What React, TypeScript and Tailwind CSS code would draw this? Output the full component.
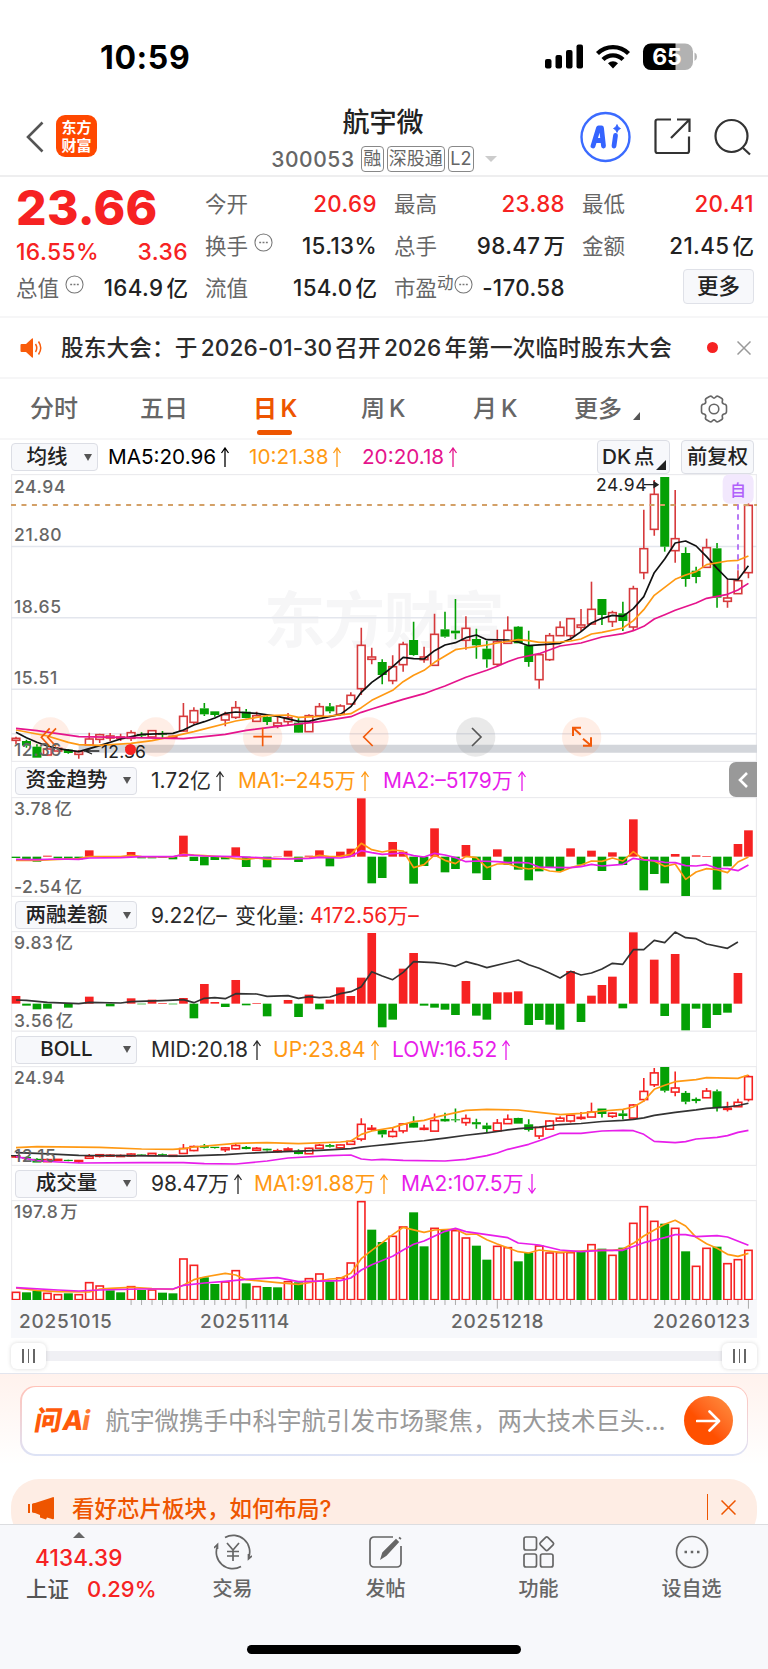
import type { ReactNode } from "react";

type Point = [number, number];
type Candle = [string, number, number, number, number];

const STEP = 31.39;
const cx = (i: number) => 48 + STEP * i;

// kind, high, body top, body bottom, low
const CANDLES: Candle[] = [
  ["r", 815, 820, 826, 837], ["g", 824, 828, 842, 848], ["g", 838, 845, 878, 878], ["r", 848, 852, 870, 872],
  ["r", 846, 850, 858, 860], ["g", 852, 854, 864, 866], ["r", 855, 860, 868, 881], ["r", 803, 822, 840, 842],
  ["r", 806, 809, 823, 834], ["r", 804, 813, 819, 828], ["r", 806, 816, 820, 828], ["r", 796, 803, 820, 828],
  ["g", 802, 807, 812, 818], ["r", 797, 797, 816, 816], ["g", 798, 804, 809, 820], ["r", 812, 814, 818, 820],
  ["r", 714, 754, 798, 800], ["r", 727, 737, 772, 778], ["g", 714, 730, 748, 753], ["g", 739, 739, 750, 755],
  ["r", 740, 749, 765, 784], ["r", 708, 728, 757, 762], ["g", 732, 740, 759, 760], ["r", 740, 752, 769, 770],
  ["g", 754, 756, 771, 780], ["r", 756, 774, 782, 790], ["r", 744, 758, 770, 780], ["g", 760, 773, 803, 804],
  ["r", 748, 752, 800, 800], ["r", 714, 725, 752, 752], ["g", 714, 724, 739, 745], ["r", 718, 723, 748, 752],
  ["r", 682, 691, 717, 720], ["r", 488, 541, 671, 690], ["r", 548, 576, 583, 598], ["g", 583, 591, 630, 658],
  ["r", 571, 605, 647, 658], ["r", 530, 538, 599, 620], ["g", 470, 525, 570, 572], ["r", 545, 576, 584, 593],
  ["r", 446, 508, 601, 603], ["g", 440, 493, 515, 518], ["g", 402, 497, 505, 523], ["r", 454, 490, 526, 554],
  ["g", 491, 522, 541, 581], ["g", 528, 551, 583, 608], ["r", 494, 530, 598, 605], ["r", 454, 496, 535, 535],
  ["g", 483, 485, 535, 535], ["g", 497, 541, 591, 605], ["r", 566, 569, 644, 671], ["r", 504, 512, 584, 588],
  ["r", 469, 487, 512, 512], ["r", 460, 461, 512, 525], ["r", 432, 480, 487, 500], ["r", 350, 433, 477, 477],
  ["g", 402, 402, 450, 480], ["r", 437, 443, 470, 486], ["g", 410, 445, 468, 498], ["r", 362, 371, 486, 496],
  ["r", 134, 251, 323, 343], ["r", 45, 88, 193, 212], ["g", 36, 36, 245, 260], ["r", 75, 221, 257, 293],
  ["g", 247, 264, 342, 365], ["g", 305, 317, 336, 355], ["r", 221, 248, 307, 307], ["g", 234, 250, 398, 428],
  ["r", 343, 399, 409, 428], ["r", 316, 347, 386, 386], ["r", 107, 121, 323, 340],
];

const MA5: Point[] = [
  [0, 802], [1, 818], [2, 832], [3, 843], [4, 851], [6, 860], [8, 842], [10, 822], [12, 808], [15, 805], [16, 795],
  [17, 780], [18, 770], [19, 759], [20, 745], [21, 741], [23, 745], [25, 754], [27, 769], [28, 769], [29, 761],
  [31, 748], [32, 725], [33, 682], [34, 652], [35, 630], [36, 605], [37, 577], [38, 581], [39, 582], [40, 557],
  [41, 540], [42, 533], [43, 518], [44, 510], [45, 524], [47, 525], [48, 531], [49, 542], [52, 535], [53, 522],
  [54, 500], [55, 474], [56, 460], [57, 451], [58, 454], [59, 431], [60, 395], [61, 323], [62, 282], [63, 234],
  [64, 228], [65, 243], [66, 275], [67, 310], [68, 342], [69, 344], [70, 302],
];
const MA10: Point[] = [
  [0, 795], [3, 813], [5, 832], [6, 839], [8, 841], [11, 835], [13, 827], [15, 814], [17, 800], [21, 768], [24, 752],
  [26, 750], [27, 757], [30, 753], [32, 746], [33, 728], [34, 706], [36, 676], [37, 650], [38, 631], [39, 616],
  [40, 592], [41, 573], [42, 554], [43, 549], [44, 545], [45, 540], [46, 534], [48, 524], [49, 527], [50, 532],
  [52, 531], [53, 528], [54, 522], [55, 507], [56, 502], [58, 489], [59, 467], [60, 434], [61, 391], [62, 367],
  [63, 343], [64, 330], [65, 320], [66, 299], [68, 288], [69, 286], [70, 273],
];
const MA20: Point[] = [
  [0, 790], [2, 797], [6, 815], [10, 817], [16, 821], [18, 815], [20, 808], [22, 796], [25, 784], [29, 770],
  [32, 755], [33, 742], [34, 732], [36, 713], [37, 703], [39, 686], [40, 674], [41, 663], [43, 637], [45, 616],
  [46, 604], [47, 590], [48, 579], [50, 566], [52, 543], [54, 534], [56, 516], [58, 506], [59, 497], [60, 484],
  [61, 462], [62, 449], [63, 436], [65, 414], [66, 400], [68, 388], [69, 375], [70, 355],
];

const FUND_BASE = 289;
const FUND = [
  293, 297, 304, 286, 294, 297, 297, 270, 289, 289, 289, 275, 294, 294, 293, 297, 226, 302, 315, 299, 297, 261, 320,
  289, 321, 288, 271, 305, 286, 270, 318, 274, 265, 114, 369, 353, 245, 274, 370, 317, 204, 336, 326, 254, 339, 359,
  267, 314, 328, 360, 333, 322, 332, 264, 313, 271, 332, 276, 314, 177, 390, 341, 369, 281, 407, 285, 287, 388, 318,
  251, 210,
];
const FUND_MA1: Point[] = [
  [0, 300], [2, 300], [4, 297], [6, 295], [7, 289], [10, 289], [11, 285], [12, 289], [15, 290], [16, 281], [17, 284],
  [18, 286], [20, 290], [21, 295], [22, 297], [23, 293], [24, 297], [26, 295], [28, 293], [29, 285], [30, 289],
  [31, 288], [32, 282], [33, 249], [34, 268], [35, 275], [36, 269], [37, 272], [38, 322], [39, 313], [40, 284],
  [41, 300], [42, 310], [43, 288], [44, 292], [45, 322], [46, 311], [47, 310], [48, 321], [49, 326], [50, 322],
  [51, 332], [52, 335], [53, 322], [54, 314], [55, 302], [56, 303], [57, 293], [58, 302], [59, 274], [60, 298],
  [61, 302], [62, 318], [63, 311], [64, 357], [65, 335], [66, 325], [67, 328], [68, 337], [69, 305], [70, 290],
];
const FUND_MA2: Point[] = [
  [0, 297], [2, 298], [4, 296], [6, 297], [7, 293], [10, 292], [12, 289], [15, 289], [16, 283], [18, 287], [21, 289],
  [24, 293], [26, 296], [28, 294], [29, 291], [31, 293], [32, 288], [33, 271], [34, 277], [35, 282], [37, 278],
  [38, 286], [39, 290], [40, 279], [41, 284], [42, 292], [43, 304], [44, 302], [46, 304], [47, 307], [48, 306],
  [49, 308], [50, 320], [51, 321], [53, 322], [54, 319], [55, 312], [56, 317], [58, 312], [59, 294], [60, 299],
  [61, 301], [62, 306], [63, 307], [64, 316], [65, 317], [66, 313], [67, 324], [68, 325], [69, 331], [70, 314],
];

const MARGIN_BASE = 732;
const MARGIN = [
  709, 738, 749, 747, 732, 744, 732, 711, 732, 740, 732, 716, 734, 720, 730, 734, 715, 776, 673, 727, 742, 661, 737,
  730, 770, 732, 721, 772, 705, 749, 720, 683, 709, 654, 520, 803, 780, 627, 580, 738, 744, 750, 766, 664, 768, 780,
  698, 698, 695, 796, 781, 795, 810, 634, 787, 708, 676, 651, 746, 518, 732, 600, 769, 583, 812, 747, 805, 766, 759,
  640, 732,
];
const MARGIN_LINE: Point[] = [
  [0, 721], [1, 722], [2, 725], [3, 728], [6, 732], [7, 728], [10, 730], [11, 726], [14, 723], [16, 720], [17, 729],
  [18, 716], [19, 714], [20, 717], [21, 702], [23, 703], [24, 710], [26, 708], [27, 716], [28, 711], [29, 714],
  [30, 712], [31, 702], [32, 696], [33, 681], [34, 636], [35, 649], [36, 660], [37, 638], [38, 606], [40, 609],
  [41, 613], [42, 620], [43, 606], [44, 614], [45, 624], [48, 601], [49, 615], [50, 626], [51, 640], [52, 655],
  [53, 635], [54, 646], [55, 640], [56, 628], [57, 611], [58, 614], [59, 570], [60, 570], [61, 542], [62, 549],
  [63, 517], [64, 534], [65, 537], [66, 553], [68, 566], [69, 547],
];

const BOLL_UP: Point[] = [
  [0, 353], [2, 350], [8, 352], [12, 357], [15, 358], [16, 356], [17, 351], [21, 340], [24, 338], [27, 341],
  [31, 336], [32, 333], [33, 313], [34, 303], [36, 293], [37, 283], [38, 275], [39, 271], [40, 262], [43, 241],
  [45, 238], [48, 240], [50, 247], [52, 254], [54, 250], [56, 243], [58, 238], [59, 231], [60, 213], [61, 178],
  [62, 166], [63, 155], [65, 149], [66, 143], [69, 145], [70, 135],
];
const BOLL_LOW: Point[] = [
  [0, 380], [2, 392], [4, 396], [6, 399], [12, 398], [16, 398], [18, 401], [21, 402], [24, 393], [26, 384],
  [30, 377], [32, 375], [33, 387], [34, 390], [35, 388], [37, 391], [41, 393], [43, 388], [45, 377], [46, 369],
  [47, 358], [49, 343], [50, 332], [52, 310], [54, 310], [56, 303], [58, 301], [59, 302], [60, 313], [61, 334],
  [63, 338], [64, 335], [65, 327], [67, 322], [68, 317], [69, 307], [70, 301],
];

const VOLUME_BASE = 810;
const VOLUME = [
  787, 787, 782, 790, 794, 790, 794, 758, 768, 781, 787, 770, 780, 780, 788, 790, 687, 706, 742, 762, 756, 722, 760,
  770, 771, 772, 755, 757, 746, 732, 754, 744, 699, 515, 599, 636, 619, 591, 547, 649, 595, 600, 602, 624, 647, 689,
  649, 653, 694, 668, 648, 669, 668, 668, 664, 644, 656, 676, 653, 580, 530, 574, 581, 595, 664, 709, 655, 650, 701,
  689, 661,
];
const VOLUME_DOWN = [
  1, 2, 5, 9, 10, 12, 14, 15, 18, 19, 22, 24, 25, 27, 30, 34, 35, 38, 39, 41, 44, 45, 48, 49, 54, 56, 58, 62, 64, 67,
];
const VOLUME_MA1: Point[] = [
  [0, 774], [2, 781], [4, 785], [7, 786], [8, 777], [9, 775], [11, 772], [13, 776], [15, 778], [16, 766], [17, 749],
  [18, 741], [20, 730], [21, 735], [22, 749], [25, 758], [27, 763], [28, 758], [30, 747], [31, 745], [32, 730],
  [33, 686], [34, 661], [35, 638], [36, 614], [37, 592], [39, 607], [40, 600], [42, 597], [43, 613], [44, 612],
  [45, 629], [46, 642], [48, 665], [49, 669], [50, 660], [52, 667], [55, 661], [57, 661], [58, 657], [59, 640],
  [60, 618], [61, 600], [62, 583], [63, 571], [64, 588], [65, 622], [66, 641], [67, 655], [68, 673], [69, 679],
  [70, 670],
];
const VOLUME_MA2: Point[] = [
  [0, 773], [4, 780], [6, 783], [8, 780], [12, 777], [15, 777], [16, 766], [18, 759], [20, 754], [22, 748],
  [25, 743], [27, 755], [31, 752], [32, 744], [33, 720], [34, 704], [36, 679], [37, 660], [38, 643], [39, 633],
  [41, 604], [42, 595], [43, 605], [45, 614], [47, 623], [48, 639], [50, 645], [52, 660], [54, 665], [56, 661],
  [58, 661], [60, 638], [62, 623], [63, 614], [64, 614], [65, 620], [67, 617], [68, 621], [70, 646],
];

const RED = "#f62222";
const GREEN = "#04a004";
const ORANGE = "#ff9913";
const MAGENTA = "#e71eea";

const bollY = (y: number) => 111 + (y - 36) * 0.3405;
const BOLL_MID: Point[] = MA20.map(([i, y]) => [i, bollY(y)]);
const BOLL_CANDLES: Candle[] = CANDLES.map(([k, a, b, c, d]) => [k, bollY(a), bollY(b), bollY(c), bollY(d)]);

function Line({ points, color, width = 5 }: { points: Point[]; color: string; width?: number }) {
  return (
    <polyline
      points={points.map(([i, y]) => `${cx(i)},${y}`).join(" ")}
      fill="none"
      stroke={color}
      strokeWidth={width}
      strokeLinejoin="round"
    />
  );
}

function Candles({ data, red }: { data: Candle[]; red: string }) {
  return (
    <g>
      {data.map(([kind, high, top, bottom, low], i) => {
        const color = kind === "r" ? red : GREEN;
        const height = Math.max(bottom - top, 3);
        return (
          <g key={i} stroke={color} strokeWidth={4.8}>
            <path d={`M${cx(i)} ${high}V${top}M${cx(i)} ${bottom}V${low}`} />
            {kind === "r" ? (
              <rect x={cx(i) - 11.5} y={top} width={23} height={height} fill="#fff" />
            ) : (
              <rect x={cx(i) - 13.5} y={top} width={27} height={height} fill={GREEN} stroke="none" />
            )}
          </g>
        );
      })}
    </g>
  );
}

function Bars({ data, base }: { data: number[]; base: number }) {
  return (
    <g>
      {data.map((y, i) => (
        <rect
          key={i}
          x={cx(i) - 13}
          y={Math.min(y, base)}
          width={26}
          height={Math.abs(y - base)}
          fill={y < base ? RED : GREEN}
        />
      ))}
    </g>
  );
}

function Panel({ top, height, children, labels }: { top: number; height: number; children: ReactNode; labels?: ReactNode }) {
  return (
    <div className="relative mx-[11px] w-[746px]">
      <svg className="block w-full" viewBox={`33 ${top} 2238 ${height}`}>
        <rect x={34.5} y={top + 1.5} width={2235} height={height - 3} fill="#fff" stroke="#ebebee" strokeWidth={4} />
        {children}
      </svg>
      {labels}
    </div>
  );
}

function Arrow({ down = false }: { down?: boolean }) {
  return (
    <svg className={`ml-[4px] h-5 w-2.5 ${down ? "rotate-180" : ""}`} viewBox="0 0 10 20" fill="none" stroke="currentColor" strokeWidth={1.3}>
      <path d="M5 1v19M1.5 6L5 1l3.5 5" />
    </svg>
  );
}

function Dots({ className = "" }: { className?: string }) {
  return (
    <svg className={`size-[19px] ${className}`} viewBox="0 0 20 20" fill="none" stroke="#777" strokeWidth={1.1}>
      <circle cx={10} cy={10} r={9} />
      <path d="M5.5 10h2M9 10h2M12.5 10h2" strokeWidth={1.8} />
    </svg>
  );
}

function Select({ label }: { label: string }) {
  return (
    <div className="flex h-[28px] w-[122px] items-center rounded-[4px] border border-[#dcdee5] bg-[#f7f8fb]">
      <span className="w-[101px] text-center text-[20.5px] leading-none font-medium text-[#222]">{label}</span>
      <svg className="ml-[6px] h-[7px] w-2" viewBox="0 0 8 7" fill="#555">
        <path d="M0 0h8L4 7z" />
      </svg>
    </div>
  );
}

function IndicatorRow({ label, height, children }: { label: string; height: string; children: ReactNode }) {
  return (
    <div className={`relative mx-[11px] flex items-center border-x border-[#f0f0f2] pt-[2px] pl-[3px] text-[21px] leading-none text-[#2b2b2b] ${height}`}>
      <Select label={label} />
      <div className="ml-3.5 flex items-center whitespace-nowrap">{children}</div>
    </div>
  );
}

type QuoteProps = { label: string; value: string; unit?: string; up?: boolean; extra?: ReactNode };

function Quote({ label, value, unit, up = false, extra }: QuoteProps) {
  return (
    <div className="flex h-[42px] items-center justify-between whitespace-nowrap">
      <span className="flex items-center text-[21.5px] text-[#666]">
        {label}
        {extra}
      </span>
      <span className={`flex items-center text-[22.3px] font-medium tracking-[0.4px] ${up ? "text-[#f62222]" : "text-[#222]"}`}>
        {value}
        {unit && <span className="ml-[3px] text-[21.5px] tracking-normal">{unit}</span>}
      </span>
    </div>
  );
}

function Header() {
  return (
    <header className="h-[177px] border-b-2 border-[#eeeeef]">
      <div className="flex h-[93px] items-start pt-[38px]">
        <span className="mt-px ml-[100px] w-[445px] text-[32px] leading-[38px] font-bold tracking-[0.6px] text-black">10:59</span>
        <svg className="mt-[5px] h-7 w-[154px]" viewBox="545 43 154 28">
          <g>
            <rect x={545} y={59} width={6.5} height={9.5} rx={2} />
            <rect x={555.5} y={55} width={6.5} height={13.5} rx={2} />
            <rect x={566} y={50} width={6.5} height={18.5} rx={2} />
            <rect x={576.5} y={44.5} width={6.5} height={24} rx={2} />
          </g>
          <g fill="none" stroke="#000" strokeWidth={4.3}>
            <path d="M597.5 53.5a22 22 0 0 1 31 0M603 59.5a14 14 0 0 1 20 0" />
          </g>
          <path d="M613 68.5l-5-5.2a7.2 7.2 0 0 1 10 0z" />
          <rect x={643} y={43.5} width={50} height={26.5} rx={8} fill="#b2b2b2" />
          <path d="M651 43.5h24.5V70H651a8 8 0 0 1-8-8V51.5a8 8 0 0 1 8-8z" />
          <path d="M694.5 52.5q2.5 1 2.5 4.3t-2.5 4.3z" fill="#b2b2b2" />
          <text x={667} y={65} textAnchor="middle" fill="#fff" className="text-[23px] font-bold">65</text>
        </svg>
      </div>
      <div className="flex h-[82px] items-start">
        <svg className="mt-7 ml-[25px] h-8 w-5" viewBox="0 0 20 32" fill="none" stroke="#555" strokeWidth={2.6}>
          <path d="M17.5 1.5L3 16l14.5 14.5" />
        </svg>
        <div className="mt-[22px] ml-[11px] flex h-[42px] w-[41px] flex-col items-center justify-center rounded-[9px] bg-[#ff4800] font-['Noto_Sans_CJK_SC'] text-[15px] leading-[18px] font-bold text-white">
          <span>东方</span>
          <span>财富</span>
        </div>
        <div className="ml-[167px] flex w-[238px] flex-col items-center">
          <h1 className="mt-[13px] text-[27px] leading-[34px] font-medium text-[#222]">航宇微</h1>
          <div className="mt-[6px] flex items-center gap-[3px] pl-[2px] text-[18px] leading-none text-[#666]">
            <span className="mr-[3px] text-[21px] font-medium tracking-[0.6px]">300053</span>
            <span className="flex h-[26px] items-center rounded-[4px] border border-[#888] px-[1.5px]">融</span>
            <span className="flex h-[26px] items-center rounded-[4px] border border-[#888] px-[1px]">深股通</span>
            <span className="flex h-[26px] items-center rounded-[4px] border border-[#888] px-[1.5px]">L2</span>
            <svg className="ml-2 h-1.5 w-3" viewBox="0 0 12 6" fill="#ccc">
              <path d="M0 0h12L6 6z" />
            </svg>
          </div>
        </div>
        <svg className="mt-[18px] ml-[78px] h-[52px] w-[174px]" viewBox="580 111 174 52" fill="none" stroke="#333" strokeWidth={2.2}>
          <circle cx={605.5} cy={137} r={24} stroke="#3b6bff" strokeWidth={2.4} />
          <g stroke="#3564ff" strokeWidth={4.8} strokeLinecap="round" strokeLinejoin="round">
            <path d="M593 146l5.5-18h3l2 18M595.5 140.5h7" />
            <path d="M615.5 135.5l-1.5 10.5" />
          </g>
          <path d="M617 124.5q.8 3.2 3.5 4-2.7.8-3.5 4-.8-3.2-3.5-4 2.7-.8 3.5-4z" fill="#3564ff" stroke="#3564ff" strokeWidth={0.8} />
          <path d="M671 119.5h-13.5a2 2 0 0 0-2 2V151a2 2 0 0 0 2 2h29.5a2 2 0 0 0 2-2v-14.5M677 119.5h12.5V132M689 120l-18 18" />
          <circle cx={731.5} cy={136} r={16} />
          <path d="M743 148l7 6.5" />
        </svg>
      </div>
    </header>
  );
}

function Quotes() {
  return (
    <section className="h-[141px] border-b-2 border-[#f6f6f7] px-[16px] pt-[6px]">
      <div className="grid grid-cols-[172px_172px_171px_172px] gap-x-[17px]">
        <div className="text-[#f62222]">
          <div className="h-[50px] text-[48px] leading-[50px] font-extrabold tracking-[0.3px]">23.66</div>
          <div className="flex h-[34px] items-center justify-between pt-[4px] text-[22.8px] font-medium tracking-[0.4px]">
            <span>16.55%</span>
            <span>3.36</span>
          </div>
          <Quote label="总值" value="164.9" unit="亿" extra={<Dots className="mb-2 ml-1.5" />} />
        </div>
        <div>
          <Quote label="今开" value="20.69" up />
          <Quote label="换手" value="15.13%" extra={<Dots className="mb-2 ml-1.5" />} />
          <Quote label="流值" value="154.0" unit="亿" />
        </div>
        <div>
          <Quote label="最高" value="23.88" up />
          <Quote label="总手" value="98.47" unit="万" />
          <Quote
            label="市盈"
            value="-170.58"
            extra={
              <>
                <span className="mb-2.5 text-[16.5px]">动</span>
                <Dots className="mb-2" />
              </>
            }
          />
        </div>
        <div className="flex flex-col">
          <Quote label="最低" value="20.41" up />
          <Quote label="金额" value="21.45" unit="亿" />
          <button className="mt-[2px] h-[35px] w-[71px] self-end rounded-[4px] border border-[#dfe1e8] bg-[#f7f8fb] text-[21.5px] leading-none font-medium text-[#222]">
            更多
          </button>
        </div>
      </div>
    </section>
  );
}

function Notice() {
  return (
    <section className="flex h-[61px] items-center border-b-2 border-[#f6f6f7]">
      <svg className="ml-[19px] h-[22px] w-[24px]" viewBox="0 0 24 22" fill="#f95c0b">
        <path d="M2.5 7H7l6-5.5q1-.5 1 .5v18q0 1-1 .5L7 15H2.5Q1.5 15 1.5 14V8q0-1 1-1z" />
        <path d="M16.5 7q2.5 4 0 8M19.5 4.5q4.5 6.5 0 13" fill="none" stroke="#f95c0b" strokeWidth={1.5} />
      </svg>
      <p className="ml-[18px] w-[610px] text-[22.6px] font-medium tracking-[0.15px] whitespace-nowrap text-[#2b2b2b] [word-spacing:-3px]">
        股东大会：于 2026-01-30 召开 2026 年第一次临时股东大会
      </p>
      <span className="ml-[36px] size-[11px] rounded-full bg-[#f62222]" />
      <svg className="ml-[19px] h-[14px] w-[14px]" viewBox="0 0 14 14" stroke="#999" strokeWidth={1.5}>
        <path d="M.5.5l13 13M13.5.5l-13 13" />
      </svg>
    </section>
  );
}

function Tabs() {
  return (
    <nav className="flex h-[61px] items-center border-b-2 border-[#f6f6f7] text-[24px] font-medium whitespace-nowrap text-[#666] [word-spacing:-2.5px]">
      <span className="ml-[30px] w-[110px]">分时</span>
      <span className="w-[113px]">五日</span>
      <span className="relative w-[108px] font-semibold text-[#ee5500]">
        日 K
        <i className="absolute top-[39px] left-[4px] h-[5px] w-[35px] rounded-full bg-[#ee5500]" />
      </span>
      <span className="w-[112px]">周 K</span>
      <span className="w-[101px]">月 K</span>
      <span className="w-[49px]">更多</span>
      <svg className="mt-[14px] ml-[10px] h-2 w-[7px]" viewBox="0 0 7 8" fill="#555">
        <path d="M7 0v8H0z" />
      </svg>
      <svg className="ml-[59px] size-[30px]" viewBox="0 0 30 30" fill="none" stroke="#666" strokeWidth={1.6}>
        <path d="M10.5 2.5q2-1 3 .8 1.5 1.5 3 0 1-1.8 3-.8l3 1.7q1.7 1 .8 2.9-.5 2.2 1.7 2.9 2.5.2 2.5 2.5v5q0 2.3-2.5 2.5-2.2.7-1.7 2.9.9 1.9-.8 2.9l-3 1.7q-2 1-3-.8-1.5-1.5-3 0-1 1.8-3 .8l-3-1.7q-1.7-1-.8-2.9.5-2.2-1.7-2.9-2.5-.2-2.5-2.5v-5q0-2.3 2.5-2.5 2.2-.7 1.7-2.9-.9-1.9.8-2.9z" />
        <circle cx={15} cy={15} r={4.8} />
      </svg>
    </nav>
  );
}

function MainChart() {
  return (
    <>
      <div className="flex h-[34px] items-center pl-[11px] text-[20.7px] leading-none whitespace-nowrap">
        <div className="flex h-[28px] w-[87px] items-center rounded-[4px] border border-[#dcdee5] bg-[#f7f8fb]">
          <span className="w-[70px] text-center text-[20.5px] font-medium text-[#222]">均线</span>
          <svg className="ml-[2px] h-[7px] w-2" viewBox="0 0 8 7" fill="#555">
            <path d="M0 0h8L4 7z" />
          </svg>
        </div>
        <span className="ml-[10px] flex w-[141px] items-center text-black">MA5:20.96<Arrow /></span>
        <span className="flex w-[113px] items-center text-[#ff9913]">10:21.38<Arrow /></span>
        <span className="flex w-[235px] items-center text-[#e5148c]">20:20.18<Arrow /></span>
        <span className="relative flex h-[34px] w-[73px] items-center rounded-[4px] border border-[#dcdee5] bg-[#f7f8fb] pl-[4px] font-medium text-[#222] [word-spacing:-3px]">
          DK 点
          <svg className="absolute right-[3px] bottom-[3px] size-[10px]" viewBox="0 0 9 9" fill="#222">
            <path d="M9 0v9H0z" />
          </svg>
        </span>
        <span className="ml-[11px] flex h-[34px] w-[73px] items-center justify-center rounded-[4px] border border-[#dcdee5] bg-[#f7f8fb] text-[20.3px] font-medium text-[#222]">
          前复权
        </span>
      </div>
      <Panel
        top={27}
        height={864}
        labels={
          <div className="text-[17.5px] leading-none font-medium tracking-[0.6px] text-[#666]">
            <span className="absolute top-[4px] left-[3px]">24.94</span>
            <span className="absolute top-[52px] left-[3px]">21.80</span>
            <span className="absolute top-[124px] left-[3px]">18.65</span>
            <span className="absolute top-[195px] left-[3px]">15.51</span>
            <span className="absolute top-[267px] left-[3px]">12.36</span>
            <span className="absolute top-[269px] left-[90px] font-normal tracking-[0.2px] text-[#222]">12.36</span>
            <span className="absolute top-[2px] left-[585px] font-normal text-[#222]">24.94</span>
            <i className="absolute top-[270px] left-[114px] size-[11px] rounded-full bg-[#f62222]" />
          </div>
        }
      >
        <text x={792} y={533} textLength={722} fill="#f6f6f7" fontSize={184} fontWeight={700}>
          东方财富
        </text>
        <path d="M33 244.5H2271M33 458.5H2271M33 673H2271M33 806.5H2271" stroke="#e3e6ed" strokeWidth={4.5} />
        <path d="M236 851H2271" stroke="#d3d6db" strokeWidth={24} />
        <g fill="#ff7733" fillOpacity={0.12}>
          <circle cx={151} cy={816} r={59} />
          <circle cx={468} cy={816} r={59} />
          <circle cx={788} cy={816} r={59} />
          <circle cx={1107} cy={816} r={59} />
          <circle cx={1745} cy={816} r={59} />
        </g>
        <circle cx={1427} cy={816} r={59} fill="#999" fillOpacity={0.22} />
        <Candles data={CANDLES} red="#d63a3c" />
        <path d="M33 120H2271" stroke="#d3a067" strokeWidth={6} strokeDasharray="15 16.4" />
        <Line points={MA5} color="#111" />
        <Line points={MA10} color={ORANGE} />
        <Line points={MA20} color="#e5148c" />
        <path d="M2214 118V316" stroke="#b06cf5" strokeWidth={5.5} strokeDasharray="16 14" />
        <rect x={2168} y={28} width={93} height={88} rx={20} fill="#f2e8fd" />
        <text x={2214} y={93} textAnchor="middle" fontSize={48} fontWeight={500} fill="#b060fb">自</text>
        <g fill="none" stroke="#222" strokeWidth={4}>
          <path d="M1932 59h40M1962 51l12 8-12 8z" fill="#222" />
          <path d="M298 858h-46M276 849l-20 9 20 9" />
        </g>
        <g fill="none" stroke="#f25a0a" strokeWidth={5}>
          <path d="M149 790l-25 27 25 27M168 790l-25 27 25 27" />
          <path d="M760 815h56M788 788v56" />
          <path d="M1118 789l-27 27 27 27" />
          <path d="M1719 813v-25h24M1720 789l22 20M1749 842h24v-25M1772 841l-23-20" strokeWidth={6} />
        </g>
        <path d="M1416 789l27 27-27 27" fill="none" stroke="#555" strokeWidth={5} />
      </Panel>
    </>
  );
}

const AXIS = "absolute left-[3px] text-[17.5px] leading-none font-medium tracking-[0.5px] text-[#666] [word-spacing:-3px]";

function SubCharts() {
  return (
    <>
      <IndicatorRow label="资金趋势" height="h-[35px]">
        <span className="flex w-[87px] items-center">1.72亿<Arrow /></span>
        <span className="flex w-[145px] items-center text-[#ff9913]">MA1:–245万<Arrow /></span>
        <span className="flex items-center text-[#e71eea]">MA2:–5179万<Arrow /></span>
        <span className="absolute top-0 -right-px flex h-[35px] w-[28px] items-center justify-center rounded-l-[7px] bg-[#999]">
          <svg className="h-4 w-2.5" viewBox="0 0 10 16" fill="none" stroke="#fff" strokeWidth={2.6}>
            <path d="M9 1L2 8l7 7" />
          </svg>
        </span>
      </IndicatorRow>
      <Panel
        top={110}
        height={300}
        labels={
          <>
            <span className={`${AXIS} top-[3px]`}>3.78 亿</span>
            <span className={`${AXIS} top-[81px]`}>-2.54 亿</span>
          </>
        }
      >
        <Bars data={FUND} base={FUND_BASE} />
        <Line points={FUND_MA1} color={ORANGE} />
        <Line points={FUND_MA2} color={MAGENTA} />
      </Panel>

      <IndicatorRow label="两融差额" height="h-[34px]">
        <span className="w-[84px]">9.22亿–</span>
        <span className="mr-[6px]">变化量:</span>
        <span className="tracking-[-0.1px] text-[#f62222]">4172.56万–</span>
      </IndicatorRow>
      <Panel
        top={514}
        height={302}
        labels={
          <>
            <span className={`${AXIS} top-[3px]`}>9.83 亿</span>
            <span className={`${AXIS} top-[81px]`}>3.56 亿</span>
          </>
        }
      >
        <Bars data={MARGIN} base={MARGIN_BASE} />
        <Line points={MARGIN_LINE} color="#333" />
      </Panel>

      <IndicatorRow label="BOLL" height="h-[34px]">
        <span className="flex w-[122px] items-center">MID:20.18<Arrow /></span>
        <span className="flex w-[119px] items-center text-[#ff9913]">UP:23.84<Arrow /></span>
        <span className="flex items-center text-[#e71eea]">LOW:16.52<Arrow /></span>
      </IndicatorRow>
      <Panel
        top={108}
        height={300}
        labels={
          <>
            <span className={`${AXIS} top-[3px]`}>24.94</span>
            <span className={`${AXIS} top-[81px]`}>12.15</span>
          </>
        }
      >
        <Candles data={BOLL_CANDLES} red={RED} />
        <path d="M33 377H60" stroke="#333" strokeWidth={4} />
        <Line points={BOLL_UP} color={ORANGE} />
        <Line points={BOLL_MID} color="#333" />
        <Line points={BOLL_LOW} color={MAGENTA} />
      </Panel>

      <IndicatorRow label="成交量" height="h-[34px]">
        <span className="flex w-[103px] items-center">98.47万<Arrow /></span>
        <span className="flex w-[147px] items-center text-[#ff9913]">MA1:91.88万<Arrow /></span>
        <span className="flex items-center text-[#e71eea]">MA2:107.5万<Arrow down /></span>
      </IndicatorRow>
      <Panel top={510} height={301} labels={<span className={`${AXIS} top-[3px]`}>197.8 万</span>}>
        {VOLUME.map((y, i) =>
          VOLUME_DOWN.includes(i) ? (
            <rect key={i} x={cx(i) - 13.5} y={y} width={27} height={VOLUME_BASE - y} fill={GREEN} />
          ) : (
            <rect key={i} x={cx(i) - 11} y={y} width={22} height={VOLUME_BASE - 1 - y} fill="#fff" stroke={RED} strokeWidth={4.8} />
          ),
        )}
        <Line points={VOLUME_MA1} color={ORANGE} />
        <Line points={VOLUME_MA2} color={MAGENTA} />
      </Panel>
    </>
  );
}

function Timeline() {
  const ticks = Array.from({ length: 60 }, (_, k) => k + 11);
  return (
    <div className="mx-[11px] h-[73px]">
      <div className="h-[38px] bg-[#f7f8fb]">
        <svg className="block h-[9px] w-full" viewBox="33 0 2238 27">
          {ticks.map((i) => (
            <path key={i} d={`M${cx(i)} 0V${[22, 46, 70].includes(i) ? 26 : 15}`} stroke="#aaa" strokeWidth={3} />
          ))}
        </svg>
        <div className="flex pt-[3px] text-[19px] leading-none font-medium tracking-[0.8px] text-[#666]">
          <span className="ml-[8px] w-[181px]">20251015</span>
          <span className="w-[251px]">20251114</span>
          <span className="w-[202px]">20251218</span>
          <span>20260123</span>
        </div>
      </div>
      <div className="relative mt-[5px] flex h-[27px] items-center justify-between">
        <i className="absolute inset-x-4 h-[10px] bg-[#f0f0f4]" />
        {[0, 1].map((n) => (
          <span key={n} className="relative flex h-[26px] w-[35px] items-center justify-center gap-[4px] rounded-[6px] bg-white shadow-[0_0_4px_rgba(0,0,0,0.15)]">
            <i className="h-[14px] w-[1.5px] bg-[#666]" />
            <i className="h-[14px] w-[1.5px] bg-[#666]" />
            <i className="h-[14px] w-[1.5px] bg-[#666]" />
          </span>
        ))}
      </div>
    </div>
  );
}

function AskBar() {
  return (
    <section className="h-[92px] border-t border-[#e3e5ee] bg-linear-to-b from-[#fff2ed] to-white px-[20px] pt-[12px]">
      <div className="h-[70px] rounded-[15px] bg-linear-to-b from-[#ffc2b8] to-[#dde3f6] p-[1.5px]">
        <div className="flex h-full items-center rounded-[14px] bg-white pl-[13px]">
          <span className="flex w-[71px] items-center text-[27px] leading-none font-black text-[#ff5a0a]">
            <i className="flex -skew-x-10 items-center tracking-[-1px] not-italic">
              问<b className="ml-0.5 text-[27px] font-extrabold">A</b>
              <b className="text-[27px] font-extrabold text-[#ff7a33]">i</b>
            </i>
          </span>
          <p className="w-[570px] text-[24.5px] whitespace-nowrap text-[#999]">航宇微携手中科宇航引发市场聚焦，两大技术巨头...</p>
          <span className="ml-[8px] flex size-[49px] items-center justify-center rounded-full bg-linear-to-bl from-[#ff9140] to-[#ff5000] to-60%">
            <svg className="h-[22px] w-[25px]" viewBox="0 0 25 22" fill="none" stroke="#fff" strokeWidth={2.6}>
              <path d="M1 11h21M13.5 1.5L23 11l-9.5 9.5" strokeLinecap="round" strokeLinejoin="round" />
            </svg>
          </span>
        </div>
      </div>
    </section>
  );
}

function Promo() {
  return (
    <section className="h-[59px] overflow-hidden px-[11px] pt-[14px]">
      <div className="flex h-[62px] items-start rounded-[28px] bg-[#feede4] text-[#ee5500]">
        <svg className="mt-[17px] ml-[17px] h-[24px] w-[27px]" viewBox="0 0 27 24" fill="#ee5500">
          <path d="M0 8h2v9H0zM4 8q1-1 3-1L24 1.5q2-1 2 .5v20q0 2-2 1l-5-1.5-1 2-6-2v-2.500L7 17q-3 0-3-1z" />
        </svg>
        <p className="mt-[13px] ml-[17px] w-[635px] text-[22.5px] font-medium">看好芯片板块，如何布局?</p>
        <i className="mt-[15px] h-[26px] w-px bg-[#ee5500]" />
        <svg className="mt-[21px] ml-[13px] size-[15px]" viewBox="0 0 15 15" stroke="#ee5500" strokeWidth={1.5}>
          <path d="M.5.5l14 14M14.5.5l-14 14" />
        </svg>
      </div>
    </section>
  );
}

function NavItem({ label, children }: { label: string; children: ReactNode }) {
  return (
    <div className="flex w-[153px] flex-col items-center pt-[8px]">
      <svg className="size-[38px]" viewBox="0 0 38 38" fill="none" stroke="#666" strokeWidth={1.7}>
        {children}
      </svg>
      <span className="mt-[3px] text-[20px] leading-[30px] font-medium text-[#666]">{label}</span>
    </div>
  );
}

function BottomNav() {
  return (
    <footer className="h-[145px] border-t border-[#dcdde0] bg-[#f7f8fb]">
      <div className="flex h-[120px]">
        <div className="flex w-[156px] shrink-0 flex-col pl-[26px] whitespace-nowrap">
          <svg className="mt-[7px] ml-[47px] h-1.5 w-3" viewBox="0 0 12 6" fill="#666">
            <path d="M6 0l6 6H0z" />
          </svg>
          <span className="mt-[4px] ml-[9px] text-[22.5px] leading-[32px] font-medium tracking-[0.2px] text-[#f62222]">4134.39</span>
          <span className="flex items-center text-[21.5px] leading-[30px] font-medium text-[#555]">
            上证<b className="ml-[18px] text-[22px] font-medium text-[#f62222]">0.29%</b>
          </span>
        </div>
        <NavItem label="交易">
          <path d="M11 4.5A16.5 16.5 0 0 1 34.5 25M27 33.5A16.5 16.5 0 0 1 3.5 13M0 15l3.5-3.5V16M34.5 21v5l3.5-3" />
          <path d="M13 10l6 7 6-7M19 17v11M13 18.5h12M13 23h12" />
        </NavItem>
        <NavItem label="发帖">
          <path d="M26 4H7a4 4 0 0 0-4 4v22a4 4 0 0 0 4 4h23a4 4 0 0 0 4-4V13" />
          <path d="M14.5 25l1.5-5L29 7l2 2-12 13zM32 4.5l2 1.5" fill="#666" />
        </NavItem>
        <NavItem label="功能">
          <rect x={4} y={4} width={12.5} height={13} rx={2} />
          <rect x={4} y={21} width={12.5} height={13} rx={2} />
          <rect x={20.5} y={21} width={12.5} height={13} rx={2} />
          <rect x={21.5} y={5.5} width={10.5} height={10.5} rx={1.5} transform="rotate(45 26.75 10.75)" />
        </NavItem>
        <NavItem label="设自选">
          <circle cx={19} cy={19} r={15.5} />
          <path d="M11.5 19h2.5M17.75 19h2.5M24 19h2.5" strokeWidth={2.5} />
        </NavItem>
      </div>
      <div className="mx-auto h-[9px] w-[274px] rounded-full bg-black" />
    </footer>
  );
}

export default function App() {
  return (
    <main className="h-[1669px] w-[768px] overflow-hidden bg-white font-[Inter,'Noto_Sans_CJK_SC',sans-serif]">
      <Header />
      <Quotes />
      <Notice />
      <Tabs />
      <MainChart />
      <SubCharts />
      <Timeline />
      <AskBar />
      <Promo />
      <BottomNav />
    </main>
  );
}
